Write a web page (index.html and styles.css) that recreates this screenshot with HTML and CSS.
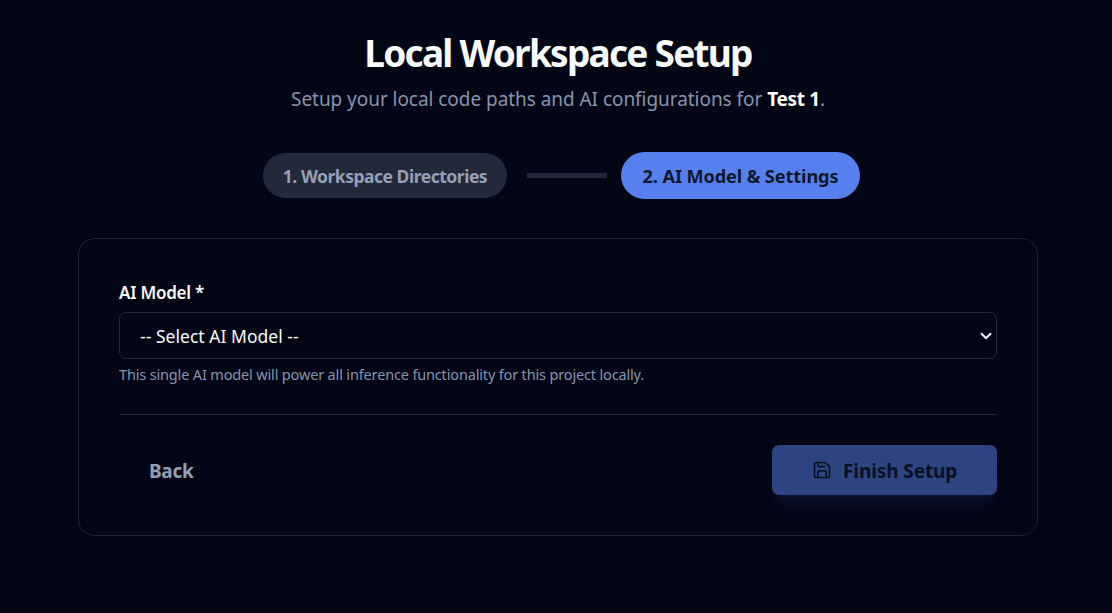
FILE: index.html
```html
<!DOCTYPE html>
<html lang="en">
<head>
<meta charset="utf-8">
<title>Local Workspace Setup</title>
<link rel="stylesheet" href="styles.css">
</head>
<body>
<main class="page">
  <header class="header">
    <h1 class="title"><span>Local Workspace Setup</span></h1>
    <p class="subtitle"><span>Setup your local code paths and AI configurations for </span><strong>Test 1</strong>.</p>
  </header>
  <nav class="steps">
    <div class="step"><span>1. Workspace Directories</span></div>
    <div class="connector"></div>
    <div class="step step-active"><span>2. AI Model &amp; Settings</span></div>
  </nav>
  <section class="card">
    <div class="label"><span>AI Model *</span></div>
    <div class="select" role="combobox">
      <span>-- Select AI Model --</span>
      <svg class="chevron" width="12" height="8" viewBox="0 0 12 8" fill="none" stroke="currentColor" stroke-width="2"><path d="M1 1.2 6 6.2 11 1.2"/></svg>
    </div>
    <p class="help"><span>This single AI model will power all inference functionality for this project locally.</span></p>
    <div class="actions">
      <button class="back" type="button"><span>Back</span></button>
      <button class="finish" type="button">
        <svg width="20" height="20" viewBox="0 0 24 24" fill="none" stroke="currentColor" stroke-width="2" stroke-linecap="round" stroke-linejoin="round"><path d="M15.2 3a2 2 0 0 1 1.4.6l3.8 3.8a2 2 0 0 1 .6 1.4V19a2 2 0 0 1-2 2H5a2 2 0 0 1-2-2V5a2 2 0 0 1 2-2z"/><path d="M17 21v-7a1 1 0 0 0-1-1H8a1 1 0 0 0-1 1v7"/><path d="M7 3v4a1 1 0 0 0 1 1h7"/></svg>
        <span>Finish Setup</span>
      </button>
    </div>
  </section>
</main>
</body>
</html>
```
FILE: styles.css
```css
* { box-sizing: border-box; }
body {
  margin: 0;
  background: #030614;
  color: #f8fafc;
  font-family: "Noto Sans", "Open Sans", sans-serif;
}
.page {
  width: 960px;
  margin: 0 0 0 78px;
  padding-top: 30px;
}
.header { text-align: center; white-space: nowrap; }
.title {
  margin: 0;
  font-size: 37px;
  line-height: 45px;
  font-weight: 700;
  letter-spacing: -1.75px;
}
.subtitle {
  margin: 10px 0 0;
  font-size: 19px;
  line-height: 28px;
  color: #8795ab;
  letter-spacing: -0.05px;
}
.subtitle strong { color: #fff; letter-spacing: -0.3px; }
.steps {
  display: flex;
  align-items: center;
  height: 47px;
  margin: 39px 0 0 185px;
}
.step {
  width: 244px;
  height: 45px;
  border-radius: 24px;
  background: #222938;
  color: #94a0b5;
  display: flex;
  align-items: center;
  justify-content: center;
  font-size: 17.5px;
  font-weight: 700;
  letter-spacing: -0.48px;
  white-space: nowrap;
  padding-top: 1px;
}
.step-active {
  width: 239px;
  height: 47px;
  background: #5780ef;
  color: #0f172a;
  font-size: 18.2px;
  letter-spacing: -0.12px;
}
.connector { width: 80px; height: 5px; margin: 0 14px 0 20px; background: #222938; }
.card {
  height: 298px;
  margin-top: 39px;
  padding: 39px 40px 0;
  border: 1px solid #1e2432;
  border-radius: 16px;
  box-shadow: 0 25px 50px -12px rgba(0, 0, 0, 0.25);
}
.label { height: 34px; font-size: 17px; line-height: 30px; font-weight: 600; letter-spacing: -0.25px; }
.select {
  display: flex;
  align-items: center;
  justify-content: space-between;
  height: 47px;
  padding: 1px 4px 0 20px;
  border: 1px solid #222938;
  border-radius: 7px;
  font-size: 17.5px;
  letter-spacing: 0.03px;
}
.chevron { margin-bottom: 1px; }
.help { margin: 5px 0 0; font-size: 14.5px; line-height: 20px; color: #8795ab; letter-spacing: -0.16px; white-space: nowrap; }
.actions {
  display: flex;
  justify-content: space-between;
  margin-top: 30px;
  padding-top: 30px;
  border-top: 1px solid #222938;
}
button { font-family: inherit; border: 0; font-size: 19px; font-weight: 700; height: 50px; }
.back { padding: 2px 30px 0; background: none; color: #94a0b5; letter-spacing: -0.3px; }
.finish {
  display: flex;
  align-items: center;
  width: 225px;
  padding: 0 0 0 40px;
  gap: 11px;
  background: #2e4480;
  border-radius: 7px;
  color: #0a1022;
  letter-spacing: -0.1px;
  box-shadow: 0 12px 19px -4px rgba(59, 100, 210, 0.13), 0 5px 8px -5px rgba(59, 100, 210, 0.13);
}
.finish span { padding-top: 2px; }
```
